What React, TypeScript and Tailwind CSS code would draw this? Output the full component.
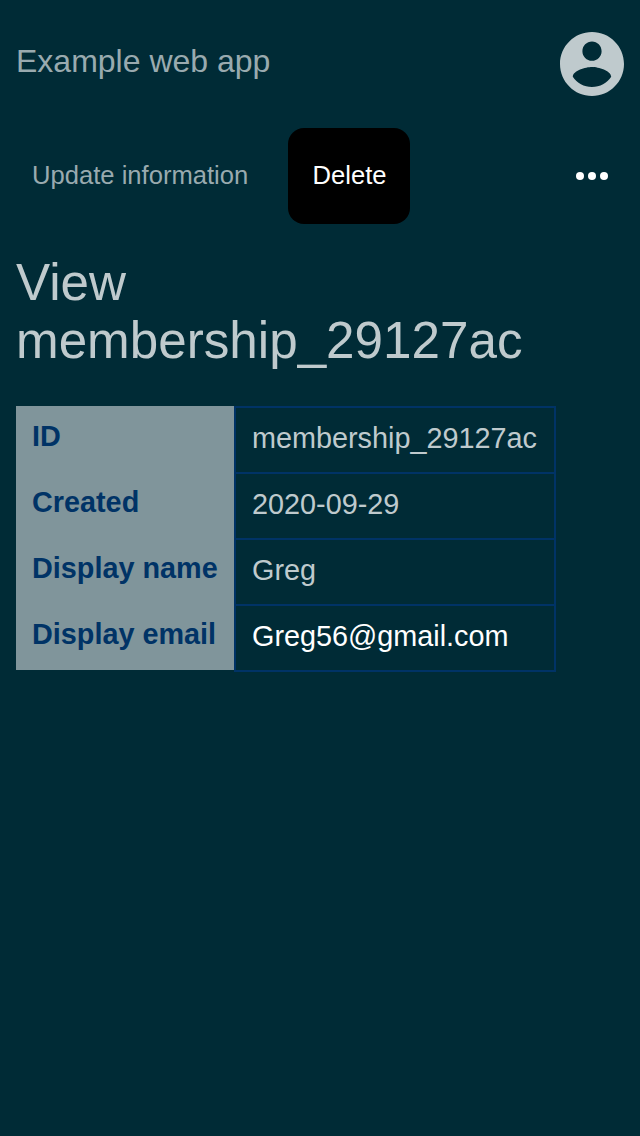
const rows = [
  { label: "ID", value: "membership_29127ac" },
  { label: "Created", value: "2020-09-29" },
  { label: "Display name", value: "Greg" },
  { label: "Display email", value: "Greg56@gmail.com", link: true },
];

export default function App() {
  return (
    <div className="min-h-[1136px] w-[640px] bg-[#002b36] px-4 pt-8 font-['Liberation_Sans',Arial,sans-serif] text-[#bfcacd]">
      <header className="flex h-16 items-center justify-between">
        <h1 className="pb-[7px] text-[32px] leading-[36px] text-[#99aaaf]">Example web app</h1>
        <svg viewBox="2 2 20 20" className="size-16 fill-[#bfcacd]">
          <path d="M12 2C6.48 2 2 6.48 2 12s4.48 10 10 10 10-4.48 10-10S17.52 2 12 2zm0 3c1.66 0 3 1.34 3 3s-1.34 3-3 3-3-1.34-3-3 1.34-3 3-3zm0 14.2c-2.5 0-4.71-1.28-6-3.22.03-1.99 4-3.08 6-3.08 1.99 0 5.97 1.09 6 3.08-1.29 1.94-3.5 3.22-6 3.22z" />
        </svg>
      </header>
      <nav className="mt-8 flex h-24 items-center text-[25.6px] leading-8">
        <button className="w-[248px] pb-[2px] pl-4 text-left text-[#99aaaf]">Update information</button>
        <button className="ml-6 h-24 w-[122px] rounded-2xl bg-black pb-[2px] pl-px text-white">Delete</button>
        <button aria-label="More" className="mr-4 ml-auto">
          <svg viewBox="0 0 32 8" className="h-2 w-8 fill-white">
            <circle cx="4" cy="4" r="4" /><circle cx="16" cy="4" r="4" /><circle cx="28" cy="4" r="4" />
          </svg>
        </button>
      </nav>
      <h2 className="mt-[30px] text-[51.2px] leading-[58px]">View<br />membership_29127ac</h2>
      <dl className="mt-9 grid w-[540px] grid-cols-[218px_322px] text-[28.8px] leading-8">
        {rows.map((row, i) => (
          <div key={row.label} className="contents">
            <dt className="h-[66px] bg-[#80959b] pt-[14px] pl-4 font-bold text-[#003366]">{row.label}</dt>
            <dd className={`border-2 border-[#003366] pt-[14px] pl-4 ${i === 3 ? "h-[68px]" : "h-[66px] border-b-0"} ${row.link ? "text-white" : ""}`}>{row.value}</dd>
          </div>
        ))}
      </dl>
    </div>
  );
}
